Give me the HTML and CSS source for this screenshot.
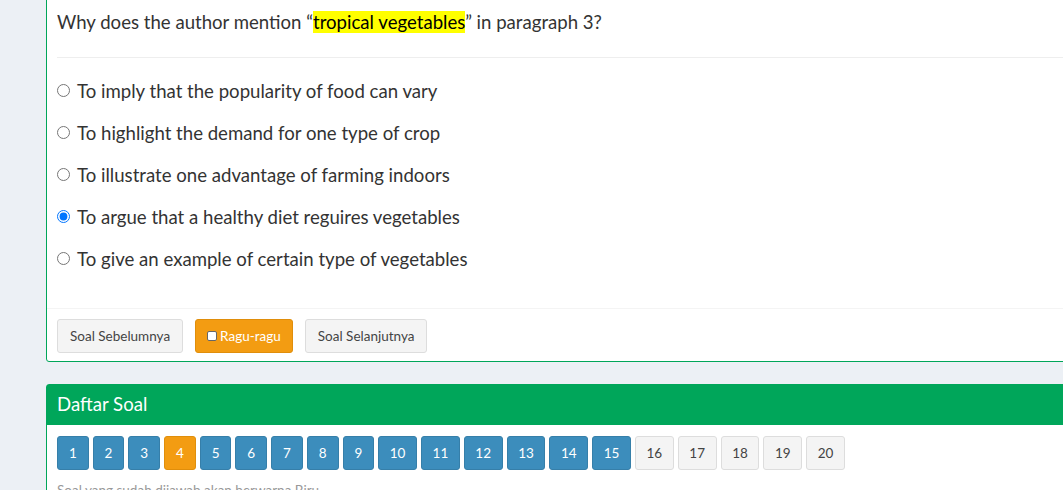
FILE: index.html
```html
<!DOCTYPE html>
<html>
<head>
<meta charset="utf-8">
<link rel="stylesheet" href="styles.css">
</head>
<body>
<div class="content">
  <div class="box box-question">
    <div class="box-body">
      <p class="question">Why does the author mention “<span class="hl">tropical vegetables</span>” in paragraph 3?</p>
      <hr class="sep">
      <ul class="options">
        <li><label><input type="radio" name="q"><span>To imply that the popularity of food can vary</span></label></li>
        <li><label><input type="radio" name="q"><span>To highlight the demand for one type of crop</span></label></li>
        <li><label><input type="radio" name="q"><span>To illustrate one advantage of farming indoors</span></label></li>
        <li><label><input type="radio" name="q" checked><span>To argue that a healthy diet reguires vegetables</span></label></li>
        <li><label><input type="radio" name="q"><span>To give an example of certain type of vegetables</span></label></li>
      </ul>
    </div>
    <div class="box-footer">
      <button class="btn btn-default">Soal Sebelumnya</button>
      <button class="btn btn-warning"><span class="chk"></span>Ragu-ragu</button>
      <button class="btn btn-default">Soal Selanjutnya</button>
    </div>
  </div>

  <div class="box box-list">
    <div class="box-header">Daftar Soal</div>
    <div class="box-body list-body">
      <div class="nums">
        <button class="num done">1</button>
        <button class="num done">2</button>
        <button class="num done">3</button>
        <button class="num doubt">4</button>
        <button class="num done">5</button>
        <button class="num done">6</button>
        <button class="num done">7</button>
        <button class="num done">8</button>
        <button class="num done">9</button>
        <button class="num w2 done">10</button>
        <button class="num w2 done">11</button>
        <button class="num w2 done">12</button>
        <button class="num w2 done">13</button>
        <button class="num w2 done">14</button>
        <button class="num w2 done">15</button>
        <button class="num w2">16</button>
        <button class="num w2">17</button>
        <button class="num w2">18</button>
        <button class="num w2">19</button>
        <button class="num w2">20</button>
      </div>
      <p class="help">Soal yang sudah dijawab akan berwarna Biru</p>
    </div>
  </div>
</div>
</body>
</html>
```

FILE: styles.css
```css
html, body {
  margin: 0;
  padding: 0;
  background: #ecf0f5;
  overflow: hidden;
  height: 490px;
}
body {
  font-family: Lato, "Liberation Sans", sans-serif;
  color: #333;
}
.content {
  padding-left: 46px;
}
.box {
  background: #fff;
  border: 1px solid #00a65a;
  border-radius: 3px;
  margin-right: -40px;
}
.box-question {
  margin-top: -20px;
}
.box-body {
  padding: 10px;
}
.question {
  margin: 18px 0 22px;
  font-size: 18.6px;
  line-height: 26px;
}
.hl {
  background: #ffff00;
  color: #000;
}
.sep {
  margin: 0;
  border: 0;
  border-top: 1px solid #eee;
  height: 0;
}
.options {
  list-style: none;
  margin: 12px 0 18px;
  padding: 0;
}
.options li {
  padding: 8px 0;
  font-size: 18.6px;
  line-height: 26px;
}
.options label {
  display: flex;
  align-items: center;
  gap: 7px;
}
.options input {
  margin: 0;
  width: 13px;
  height: 13px;
  position: relative;
  top: -1px;
}
.box-footer {
  border-top: 1px solid #f4f4f4;
  padding: 10px 10px 8px;
  display: flex;
  gap: 12px;
}
.btn {
  font-family: inherit;
  font-size: 13.5px;
  line-height: 20px;
  padding: 6px 12px;
  border: 1px solid #ddd;
  border-radius: 3px;
  background: #f4f4f4;
  color: #444;
  height: 34px;
}
.btn-warning {
  background: #f39c12;
  border-color: #e08e0b;
  color: #fff;
  display: flex;
  align-items: center;
  gap: 3px;
  padding: 6px 11px;
}
.chk {
  display: inline-block;
  width: 8px;
  height: 8px;
  background: #fff;
  border: 1px solid #666;
  border-radius: 2px;
}
.box-list {
  margin-top: 22px;
}
.box-header {
  background: #00a65a;
  color: #fff;
  font-size: 18.6px;
  line-height: 20px;
  padding: 9px 10px 11px;
}
.list-body {
  padding: 11px 10px 10px;
}
.nums {
  display: flex;
  gap: 4px;
}
.num {
  box-sizing: border-box;
  font-family: inherit;
  font-size: 13.5px;
  line-height: 20px;
  height: 34px;
  padding: 6px 0;
  width: 31.7px;
  flex: none;
  text-align: center;
  border: 1px solid #ddd;
  border-radius: 3px;
  background: #f4f4f4;
  color: #444;
}
.num.w2 {
  width: 38.8px;
}
.num.done {
  background: #3c8dbc;
  border-color: #367fa9;
  color: #fff;
}
.num.doubt {
  background: #f39c12;
  border-color: #e08e0b;
  color: #fff;
}
.help {
  margin: 10px 0 0;
  font-size: 13.5px;
  line-height: 20px;
  color: #999;
}
```
